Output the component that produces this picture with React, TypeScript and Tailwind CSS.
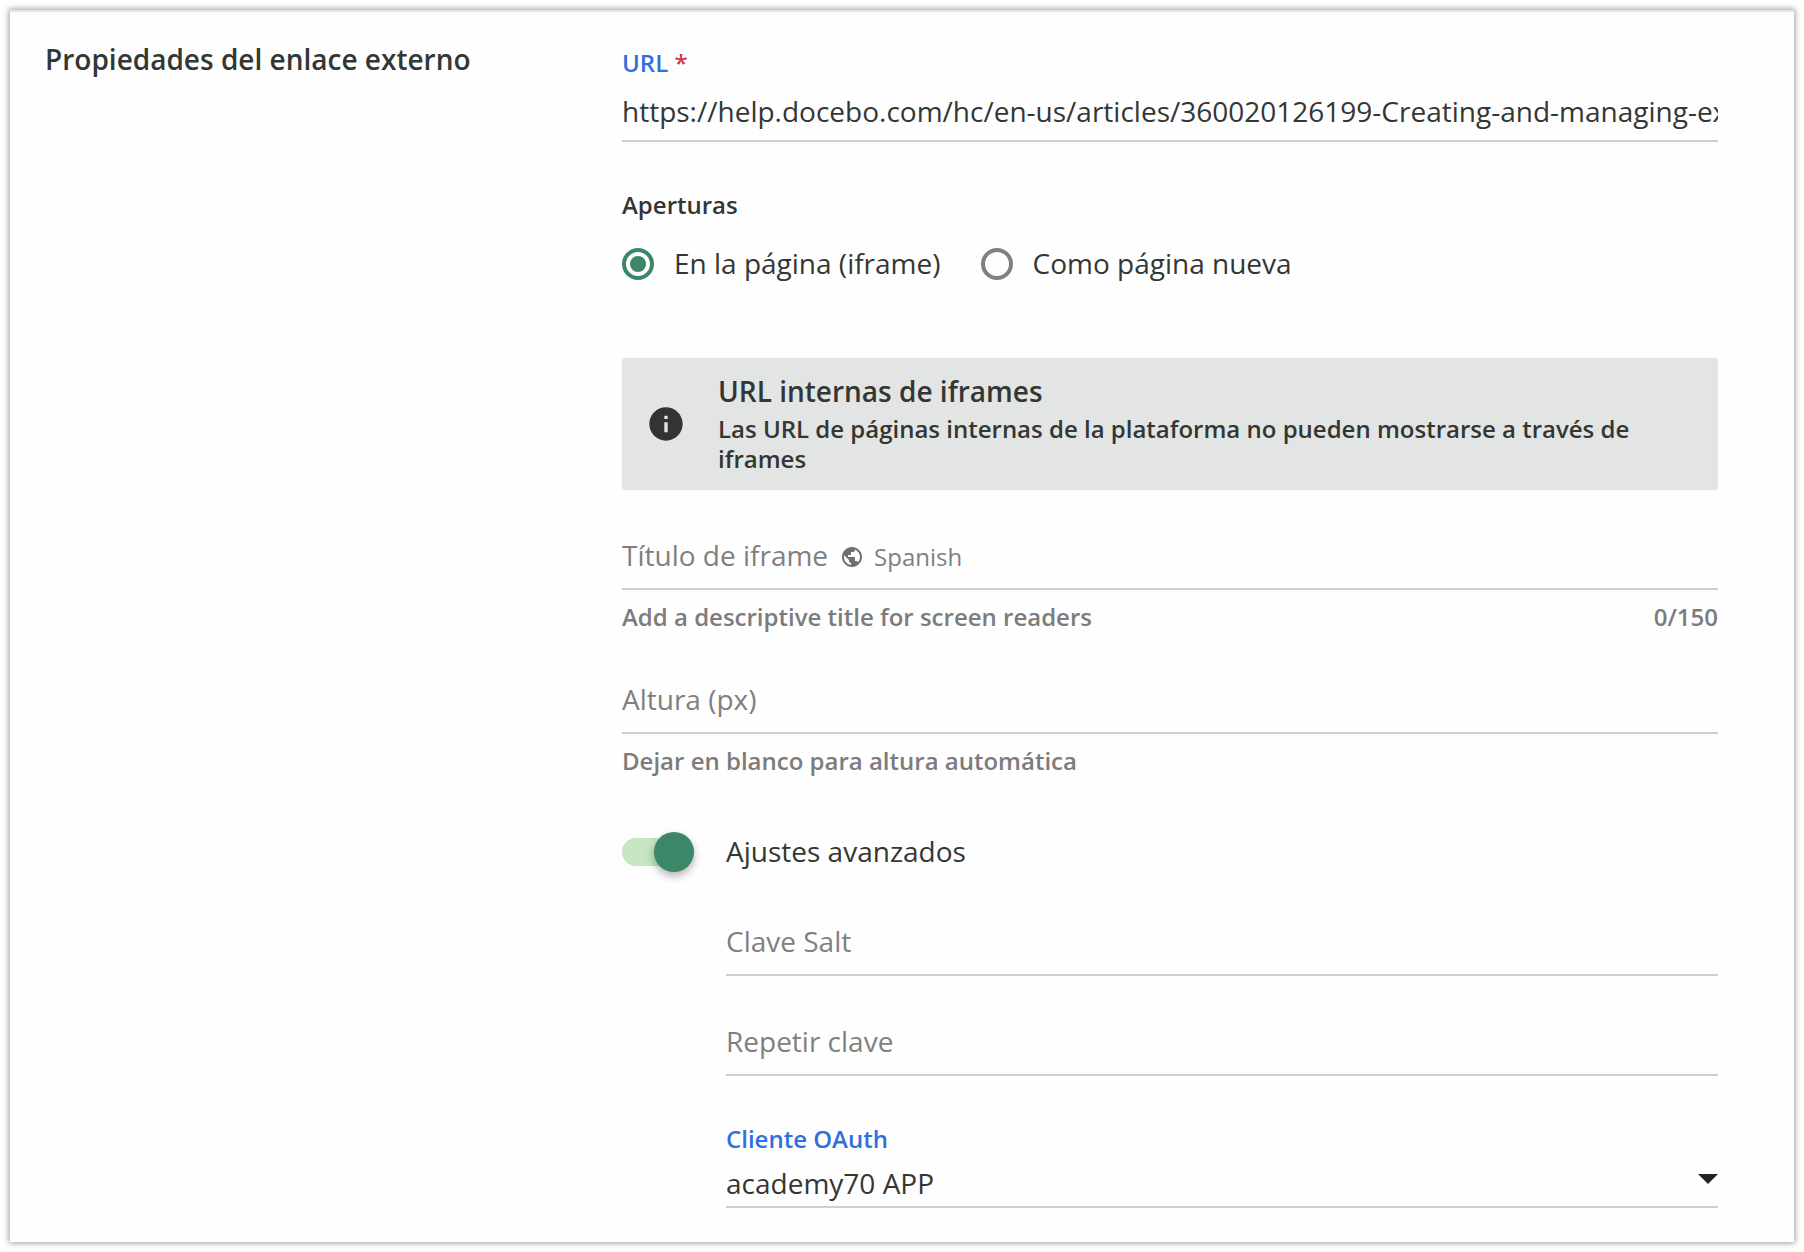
import { useId, useState, type ReactNode } from "react";

type FieldProps = {
  label: string;
  type?: string;
  adornment?: ReactNode;
  helper?: string;
  counter?: string;
};

function Field({ label, type = "text", adornment, helper, counter }: FieldProps) {
  const id = useId();
  return (
    <div>
      <div className="flex items-center border-b-2 border-[#cfcfcf] pb-[13px]">
        <label htmlFor={id} className="shrink-0 text-[28px] leading-[40px] text-[#808080]">
          {label}
        </label>
        {adornment}
        <input id={id} type={type} className="h-10 min-w-0 flex-1 bg-transparent text-[28px] outline-none" />
      </div>
      {helper && (
        <div className="mt-[11px] flex justify-between text-[24px] leading-[32px] font-semibold text-[#7c7c7c]">
          <span>{helper}</span>
          {counter && <span>{counter}</span>}
        </div>
      )}
    </div>
  );
}

function Radio({ label, checked, onSelect }: { label: string; checked: boolean; onSelect: () => void }) {
  return (
    <label className="flex items-center gap-5 text-[28px] leading-[40px]">
      <input
        type="radio"
        name="aperturas"
        checked={checked}
        onChange={onSelect}
        className="flex size-8 shrink-0 appearance-none items-center justify-center rounded-full border-4 border-[#808080] before:size-4 before:rounded-full checked:border-[#3b8768] checked:before:bg-[#3b8768]"
      />
      <span className="pb-0.5">{label}</span>
    </label>
  );
}

function GlobeIcon() {
  return (
    <svg viewBox="0 0 24 24" className="size-6 shrink-0" fill="#6e6e6e" aria-hidden="true">
      <path d="M12 2C6.48 2 2 6.48 2 12s4.48 10 10 10 10-4.48 10-10S17.52 2 12 2zm-1 17.93c-3.95-.49-7-3.85-7-7.93 0-.62.08-1.21.21-1.79L9 15v1c0 1.1.9 2 2 2v1.93zm6.9-2.54c-.26-.81-1-1.39-1.9-1.39h-1v-3c0-.55-.45-1-1-1H8v-2h2c.55 0 1-.45 1-1V7h2c1.1 0 2-.9 2-2v-.41c2.93 1.19 5 4.06 5 7.41 0 2.08-.8 3.97-2.1 5.39z" />
    </svg>
  );
}

function InfoIcon() {
  return (
    <svg viewBox="0 0 24 24" className="size-10 shrink-0" fill="#333333" aria-hidden="true">
      <path d="M12 2C6.48 2 2 6.48 2 12s4.48 10 10 10 10-4.48 10-10S17.52 2 12 2zm1 15h-2v-6h2v6zm0-8h-2V7h2v2z" />
    </svg>
  );
}

export default function App() {
  const [opening, setOpening] = useState("iframe");
  const [advanced, setAdvanced] = useState(true);
  const [url, setUrl] = useState(
    "https://help.docebo.com/hc/en-us/articles/360020126199-Creating-and-managing-external-links",
  );

  return (
    <main className="bg-white p-[10px] font-['Open_Sans',sans-serif] text-[#333734]">
      <form className="grid grid-cols-[577fr_1096fr] border-t-2 border-[#e4e4e4] bg-[#fefefe] pr-[76px] pb-[34px] pl-[35px] shadow-[0_0_6px_1px_rgba(0,0,0,0.4)]">
        <h2 className="pt-[27px] text-[28px] leading-[40px] font-semibold">Propiedades del enlace externo</h2>

        <div className="min-w-0 pt-[35px]">
          <label htmlFor="url" className="block text-[24px] leading-[32px] font-semibold text-[#2f6fe0]">
            URL <span className="text-[#d9363e]">*</span>
          </label>
          <div className="mt-3 border-b-2 border-[#cfcfcf] pb-[9px]">
            <input
              id="url"
              type="text"
              value={url}
              onChange={(e) => setUrl(e.target.value)}
              className="block h-10 w-full bg-transparent text-[28px] leading-[40px] outline-none"
            />
          </div>

          <fieldset className="mt-[47px]">
            <legend className="text-[24px] leading-[32px] font-semibold">Aperturas</legend>
            <div className="mt-[22px] flex gap-10">
              <Radio label="En la página (iframe)" checked={opening === "iframe"} onSelect={() => setOpening("iframe")} />
              <Radio label="Como página nueva" checked={opening === "page"} onSelect={() => setOpening("page")} />
            </div>
          </fieldset>

          <div className="mt-[73px] flex items-center gap-8 rounded-[3px] bg-[#e3e5e4] py-4 pr-16 pl-6">
            <InfoIcon />
            <div>
              <p className="text-[28px] leading-[34px] font-semibold">URL internas de iframes</p>
              <p className="mt-1.5 text-[24px] leading-[30px] font-semibold">
                Las URL de páginas internas de la plataforma no pueden mostrarse a través de iframes
              </p>
            </div>
          </div>

          <div className="mt-[45px] flex flex-col gap-[46px]">
            <Field
              label="Título de iframe"
              helper="Add a descriptive title for screen readers"
              counter="0/150"
              adornment={
                <span className="mx-3 flex items-center gap-2.5 pt-1 text-[24px] leading-[32px] text-[#808080]">
                  <GlobeIcon />
                  Spanish
                </span>
              }
            />
            <Field label="Altura (px)" helper="Dejar en blanco para altura automática" />
          </div>

          <label className="mt-[54px] flex items-center gap-8 text-[28px] leading-[40px]">
            <input
              type="checkbox"
              role="switch"
              checked={advanced}
              onChange={(e) => setAdvanced(e.target.checked)}
              className="flex h-7 w-[72px] shrink-0 appearance-none items-center rounded-full bg-[#d5d5d5] before:size-10 before:shrink-0 before:rounded-full before:bg-white before:shadow-[0_4px_8px_rgba(0,0,0,0.3)] checked:justify-end checked:bg-[#c5e5c3] checked:before:bg-[#3b8768]"
            />
            <span className="pb-0.5">Ajustes avanzados</span>
          </label>

          <div className="mt-12 flex flex-col gap-[45px] pl-[104px]">
            <Field label="Clave Salt" type="password" />
            <Field label="Repetir clave" type="password" />
            <div className="pt-0.5">
              <label htmlFor="oauth" className="block text-[24px] leading-[32px] font-semibold text-[#2f6fe0]">
                Cliente OAuth
              </label>
              <div className="mt-2 flex items-start border-b-2 border-[#cfcfcf] pb-[3px]">
                <select id="oauth" className="h-10 w-full appearance-none bg-transparent text-[28px] leading-[40px] outline-none">
                  <option>academy70 APP</option>
                </select>
                <svg viewBox="0 0 20 10" className="pointer-events-none mt-[11px] h-[10px] w-5 shrink-0" fill="#202622" aria-hidden="true">
                  <path d="M0 0h20L10 10z" />
                </svg>
              </div>
            </div>
          </div>
        </div>
      </form>
    </main>
  );
}
